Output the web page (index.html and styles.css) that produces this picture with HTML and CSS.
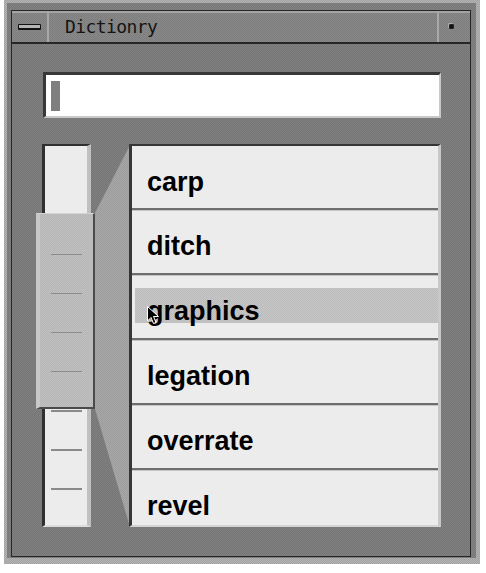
FILE: index.html
```html
<!DOCTYPE html>
<html lang="en">
<head>
    <meta charset="UTF-8">
    <title>Dictionry</title>
    <link rel="stylesheet" href="styles.css">
</head>
<body>
    <div class="window">
        <div class="frame">
            <div class="panel">
                <header class="titlebar">
                    <div class="tb-menu"><span class="menu-bar"></span></div>
                    <div class="tb-title">Dictionry</div>
                    <div class="tb-close"><span class="dot"></span></div>
                </header>
                <main class="content">
                    <div class="search"><span class="caret"></span></div>
                    <div class="browser">
                        <div class="track">
                            <span class="tick"></span>
                            <span class="tick"></span>
                            <span class="tick"></span>
                            <span class="tick"></span>
                            <span class="tick"></span>
                            <span class="tick"></span>
                            <span class="tick"></span>
                        </div>
                        <svg class="wedge" width="35" height="383" viewBox="0 0 35 383">
                            <defs>
                                <pattern id="dots" width="2" height="2" patternUnits="userSpaceOnUse">
                                    <rect width="2" height="2" fill="#9c9c9c"/>
                                    <rect width="1" height="1" fill="#a8a8a8"/>
                                    <rect x="1" y="1" width="1" height="1" fill="#a8a8a8"/>
                                </pattern>
                            </defs>
                            <polygon points="0,69 35,1 35,383 0,265" fill="url(#dots)"/>
                        </svg>
                        <div class="thumb">
                            <span class="tick"></span>
                            <span class="tick"></span>
                            <span class="tick"></span>
                            <span class="tick"></span>
                        </div>
                        <ul class="words">
                            <li class="row"><div class="word">carp</div></li>
                            <li class="row"><div class="word">ditch</div></li>
                            <li class="row"><div class="word selected">graphics
                                <svg class="pointer" width="15" height="21" viewBox="0 0 15 21">
                                    <path d="M1.5 1.5 L1.5 16 L5 12.5 L7.5 18.5 L10 17.5 L7.5 11.5 L12.5 11.5 Z" fill="#000" stroke="#fff" stroke-width="1"/>
                                </svg>
                            </div></li>
                            <li class="row"><div class="word">legation</div></li>
                            <li class="row"><div class="word">overrate</div></li>
                            <li class="row"><div class="word">revel</div></li>
                        </ul>
                    </div>
                </main>
            </div>
        </div>
    </div>
</body>
</html>
```

FILE: styles.css
```css
body {
    margin: 0;
    background: #fff;
}

.window {
    margin-left: 4px;
    width: 476px;
    height: 564px;
    box-sizing: border-box;
    padding: 3px 4px 6px 3px;
    background: repeating-conic-gradient(#a2a2a2 0 25%, #b4b4b4 0 50%) 0 0 / 2px 2px;
}

.frame {
    height: 100%;
    box-sizing: border-box;
    padding: 7px 5px 1px 4px;
    background: repeating-conic-gradient(#787878 0 25%, #828282 0 50%) 0 0 / 2px 2px;
}

.panel {
    height: 100%;
    box-sizing: border-box;
    border: 1px solid #262626;
    display: flex;
    flex-direction: column;
}

/* title bar */
.titlebar {
    display: flex;
    height: 31px;
    border-bottom: 2px solid #262626;
    background: repeating-conic-gradient(#7e7e7e 0 25%, #888 0 50%) 0 0 / 2px 2px;
    box-shadow: inset 0 2px #a4a4a4;
}

.tb-menu {
    width: 35px;
    border-right: 2px solid #a8a8a8;
    display: flex;
    align-items: center;
    justify-content: center;
}

.menu-bar {
    width: 21px;
    height: 3px;
    margin-top: 1px;
    background: #b4b4b4;
    border: 1px solid #111;
    border-bottom-width: 2px;
    border-radius: 1px;
}

.tb-title {
    flex: 1;
    padding-left: 16px;
    font-family: "DejaVu Sans Mono", "Liberation Mono", monospace;
    font-size: 18px;
    letter-spacing: -0.6px;
    line-height: 32px;
    color: #141414;
}

.tb-close {
    width: 31px;
    border-left: 2px solid #a8a8a8;
    display: flex;
    align-items: center;
}

.dot {
    width: 3px;
    height: 3px;
    margin-left: 10px;
    background: #111;
    border: 1px solid #222;
    border-radius: 1px;
    box-shadow: -1px -1px 0 #aaa;
}

/* body */
.content {
    flex: 1;
    padding: 28px 29px 0 31px;
    background: repeating-conic-gradient(#767676 0 25%, #808080 0 50%) 0 0 / 2px 2px;
}

.search {
    height: 46px;
    box-sizing: border-box;
    background: #fff;
    border-top: 3px solid #383838;
    border-left: 3px solid #383838;
    border-right: 2px solid #c8c8c8;
    border-bottom: 2px solid #c8c8c8;
    padding: 6px 0 0 5px;
}

.caret {
    display: block;
    width: 9px;
    height: 30px;
    background: #7f7f7f;
}

.browser {
    position: relative;
    display: flex;
    height: 383px;
    margin-top: 26px;
    margin-left: -1px;
}

.track {
    width: 49px;
    box-sizing: border-box;
    background: #ececec;
    border-top: 2px solid #303030;
    border-left: 3px solid #303030;
    border-right: 4px solid #c0c0c0;
    border-bottom: 2px solid #dcdcdc;
    padding-top: 108px;
}

.tick {
    display: block;
    width: 31px;
    height: 2px;
    margin: 0 0 37px 6px;
    background: #8a8a8a;
}

.wedge {
    position: absolute;
    left: 53px;
    top: 0;
}

.thumb {
    position: absolute;
    left: -6px;
    top: 69px;
    width: 59px;
    height: 196px;
    box-sizing: border-box;
    padding-top: 40px;
    border-top: 1px solid #d4d4d4;
    border-left: 4px solid #c8c8c8;
    border-right: 2px solid #4a4a4a;
    border-bottom: 2px solid #4a4a4a;
    background: repeating-conic-gradient(#b6b6b6 0 25%, #c0c0c0 0 50%) 0 0 / 2px 2px;
}

.thumb .tick {
    height: 1px;
    margin: 0 0 38px 11px;
    background: #8c8c8c;
}

/* word list */
.words {
    position: relative;
    z-index: 1;
    list-style: none;
    margin: 0 0 0 38px;
    padding: 0;
    width: 312px;
    box-sizing: border-box;
    background: #ececec;
    border-top: 2px solid #363636;
    border-left: 3px solid #363636;
    border-right: 3px solid #c8c8c8;
    border-bottom: 2px solid #d4d4d4;
    overflow: hidden;
}

.row {
    height: 65px;
    box-sizing: border-box;
    padding-top: 13px;
    border-top: 2px solid #6e6e6e;
    box-shadow: inset 0 1px #c4c4c4;
}

.row:first-child {
    height: 62px;
    border-top: none;
    box-shadow: none;
}

.word {
    position: relative;
    height: 25px;
    margin-left: 3px;
    padding: 10px 0 0 12px;
    font-family: "Liberation Sans", Arial, sans-serif;
    font-weight: bold;
    font-size: 27px;
    line-height: 26px;
    color: #000;
}

.word.selected {
    background: repeating-conic-gradient(#bcbcbc 0 25%, #c6c6c6 0 50%) 0 0 / 2px 2px;
}

.pointer {
    position: absolute;
    left: 11px;
    top: 17px;
}
```
